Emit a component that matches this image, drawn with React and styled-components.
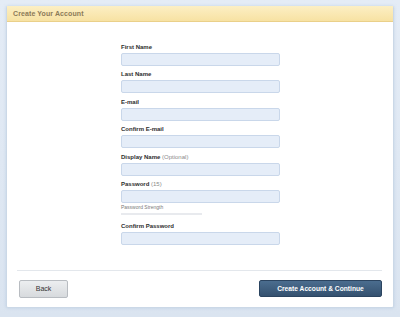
import React from "react";
import styled, { createGlobalStyle } from "styled-components";

const Global = createGlobalStyle`
  html, body { margin: 0; padding: 0; }
  body {
    background: linear-gradient(180deg, #e4ecf6 0%, #dae4f0 100%);
    width: 400px;
    height: 317px;
    overflow: hidden;
    font-family: "Liberation Sans", Arial, sans-serif;
  }
`;

const Page = styled.div`
  padding: 6px 6px 0 6px;
`;

const Panel = styled.div`
  box-sizing: border-box;
  width: 388px;
  height: 302px;
  background: #fff;
  border: 1px solid #cbd8e7;
  border-top: none;
  border-radius: 2px;
  box-shadow: 0 0 3px rgba(160, 185, 215, 0.5);
  display: flex;
  flex-direction: column;
`;

const Header = styled.div`
  height: 16px;
  box-sizing: border-box;
  background: linear-gradient(180deg, #fcefc4 0%, #f7e2a3 100%);
  border-bottom: 1px solid #ead08a;
  display: flex;
  align-items: center;
  padding-left: 6px;
  font-size: 7px;
  font-weight: bold;
  color: #8c7a58;
  letter-spacing: 0.1px;
`;

const Form = styled.div`
  padding: 21px 0 0 114px;
  display: flex;
  flex-direction: column;
  width: 159px;
`;

const Field = styled.div`
  display: flex;
  flex-direction: column;
  margin-bottom: ${(p) => p.$gap ?? 4.4}px;
`;

const Label = styled.div`
  font-size: 6px;
  line-height: 8px;
  font-weight: bold;
  color: #2e2e2e;
  margin-bottom: 2px;
`;

const Hint = styled.span`
  font-weight: normal;
  color: #8a8a8a;
`;

const Input = styled.div`
  box-sizing: border-box;
  height: 13px;
  width: 159px;
  background: #e5edf8;
  border: 1px solid #c9d7ea;
  border-radius: 2px;
`;

const StrengthText = styled.div`
  font-size: 5px;
  line-height: 6px;
  color: #7a7a7a;
  margin-top: 1px;
`;

const StrengthBar = styled.div`
  width: 81px;
  height: 2px;
  background: #e8eaee;
  margin-top: 3px;
`;

const Footer = styled.div`
  margin: 25px 11px 0 10px;
  border-top: 1px solid #e3e7ec;
  padding: 9px 0 0 2px;
  display: flex;
  justify-content: space-between;
  align-items: flex-start;
`;

const Button = styled.div`
  box-sizing: border-box;
  height: ${(p) => (p.$primary ? 17 : 18)}px;
  width: ${(p) => (p.$primary ? 123 : 49)}px;
  border-radius: 2px;
  display: flex;
  align-items: center;
  justify-content: center;
  font-size: ${(p) => (p.$primary ? 6.7 : 7)}px;
  font-weight: ${(p) => (p.$primary ? "bold" : "normal")};
  color: ${(p) => (p.$primary ? "#ffffff" : "#333")};
  background: ${(p) =>
    p.$primary
      ? "linear-gradient(180deg, #4b6d8f 0%, #34516f 100%)"
      : "linear-gradient(180deg, #eceef0 0%, #d7dadd 100%)"};
  border: 1px solid ${(p) => (p.$primary ? "#2b4460" : "#b8bcc1")};
`;

const fields = [
  { label: "First Name" },
  { label: "Last Name" },
  { label: "E-mail" },
  { label: "Confirm E-mail" },
  { label: "Display Name", hint: "(Optional)" },
];

export default function App() {
  return (
    <>
      <Global />
      <Page>
        <Panel>
          <Header>Create Your Account</Header>
          <Form>
            {fields.map((f) => (
              <Field key={f.label}>
                <Label>
                  {f.label}
                  {f.hint && <Hint> {f.hint}</Hint>}
                </Label>
                <Input />
              </Field>
            ))}
            <Field $gap={7}>
              <Label>
                Password <Hint>(15)</Hint>
              </Label>
              <Input />
              <StrengthText>Password Strength</StrengthText>
              <StrengthBar />
            </Field>
            <Field $gap={0}>
              <Label>Confirm Password</Label>
              <Input />
            </Field>
          </Form>
          <Footer>
            <Button>Back</Button>
            <Button $primary>Create Account &amp; Continue</Button>
          </Footer>
        </Panel>
      </Page>
    </>
  );
}
